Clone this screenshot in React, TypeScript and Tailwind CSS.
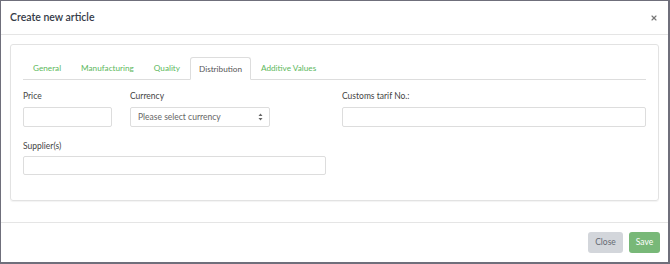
import { X } from 'lucide-react';

const tabs = ['General', 'Manufacturing', 'Quality', 'Distribution', 'Additive Values'];

export default function App() {
    return (
        <div
            className="h-[264px] w-[670px] bg-[#6f6f7b] pt-px pl-px pr-[2px] pb-[2px] overflow-hidden"
            style={{ fontFamily: 'Lato, "Open Sans", sans-serif' }}
        >
            <div className="flex h-full flex-col bg-white">
                {/* HEADER */}
                <div className="flex h-[34px] items-center justify-between border-b border-[#e5e5e5] pl-[9px] pr-[10px] pt-px">
                    <h4 className="text-[10.5px] font-semibold text-[#343a47]">Create new article</h4>
                    <X size={8} strokeWidth={3.5} className="text-[#777]" />
                </div>

                {/* BODY */}
                <div className="flex-1 px-[9px] pt-[9px]">
                    <div className="rounded-[3px] border border-[#e2e2e2] px-[12px] pt-[12px] pb-[25px] shadow-[0_1px_1px_rgba(0,0,0,0.05)]">
                        <ul className="flex h-[23px] border-b border-[#dddddd] text-[8.2px]">
                            {tabs.map((t) => (
                                <li
                                    key={t}
                                    className={
                                        t === 'Distribution'
                                            ? '-mb-px flex items-center rounded-t-[3px] border border-b-white border-[#dddddd] bg-white px-[8px] pt-px text-[#555]'
                                            : 'flex items-center border border-transparent px-[9px] pt-px text-[#5cb85c]'
                                    }
                                >
                                    {t}
                                </li>
                            ))}
                        </ul>

                        <div className="mt-[10px] flex text-[8.5px] text-[#444]">
                            <div className="w-[89px]">
                                <label className="block h-[12px]">Price</label>
                                <input className="mt-[5px] block h-[20px] w-[89px] rounded-[2px] border border-[#ddd]" />
                            </div>
                            <div className="ml-[18px] w-[142px]">
                                <label className="block h-[12px]">Currency</label>
                                <div className="mt-[5px] flex h-[20px] items-center justify-between rounded-[2px] border border-[#ddd] pl-[7px] pr-[6px] text-[#666]">
                                    <span>Please select currency</span>
                                    <svg width="5" height="8" viewBox="0 0 5 8">
                                        <path d="M2.5 0.5 L4.5 3 L0.5 3 Z M2.5 7.5 L4.5 5 L0.5 5 Z" fill="#666" />
                                    </svg>
                                </div>
                            </div>
                            <div className="ml-[72px] flex-1">
                                <label className="block h-[12px]">Customs tarif No.:</label>
                                <input className="mt-[5px] block h-[20px] w-[304px] rounded-[2px] border border-[#ddd]" />
                            </div>
                        </div>

                        <div className="mt-[13px] text-[8.5px] text-[#444]">
                            <label className="block h-[12px]">Supplier(s)</label>
                            <input className="mt-[4px] block h-[19px] w-[303px] rounded-[2px] border border-[#ddd]" />
                        </div>
                    </div>
                </div>

                {/* FOOTER */}
                <div className="flex h-[40px] items-center justify-end gap-[6px] border-t border-[#e5e5e5] pr-[8px] text-[8.5px]">
                    <button className="h-[21px] w-[35px] rounded-[3px] bg-[#d3d6db] text-[#666a73]">Close</button>
                    <button className="h-[21px] w-[31px] rounded-[3px] bg-[#78b878] text-white">Save</button>
                </div>
            </div>
        </div>
    );
}
